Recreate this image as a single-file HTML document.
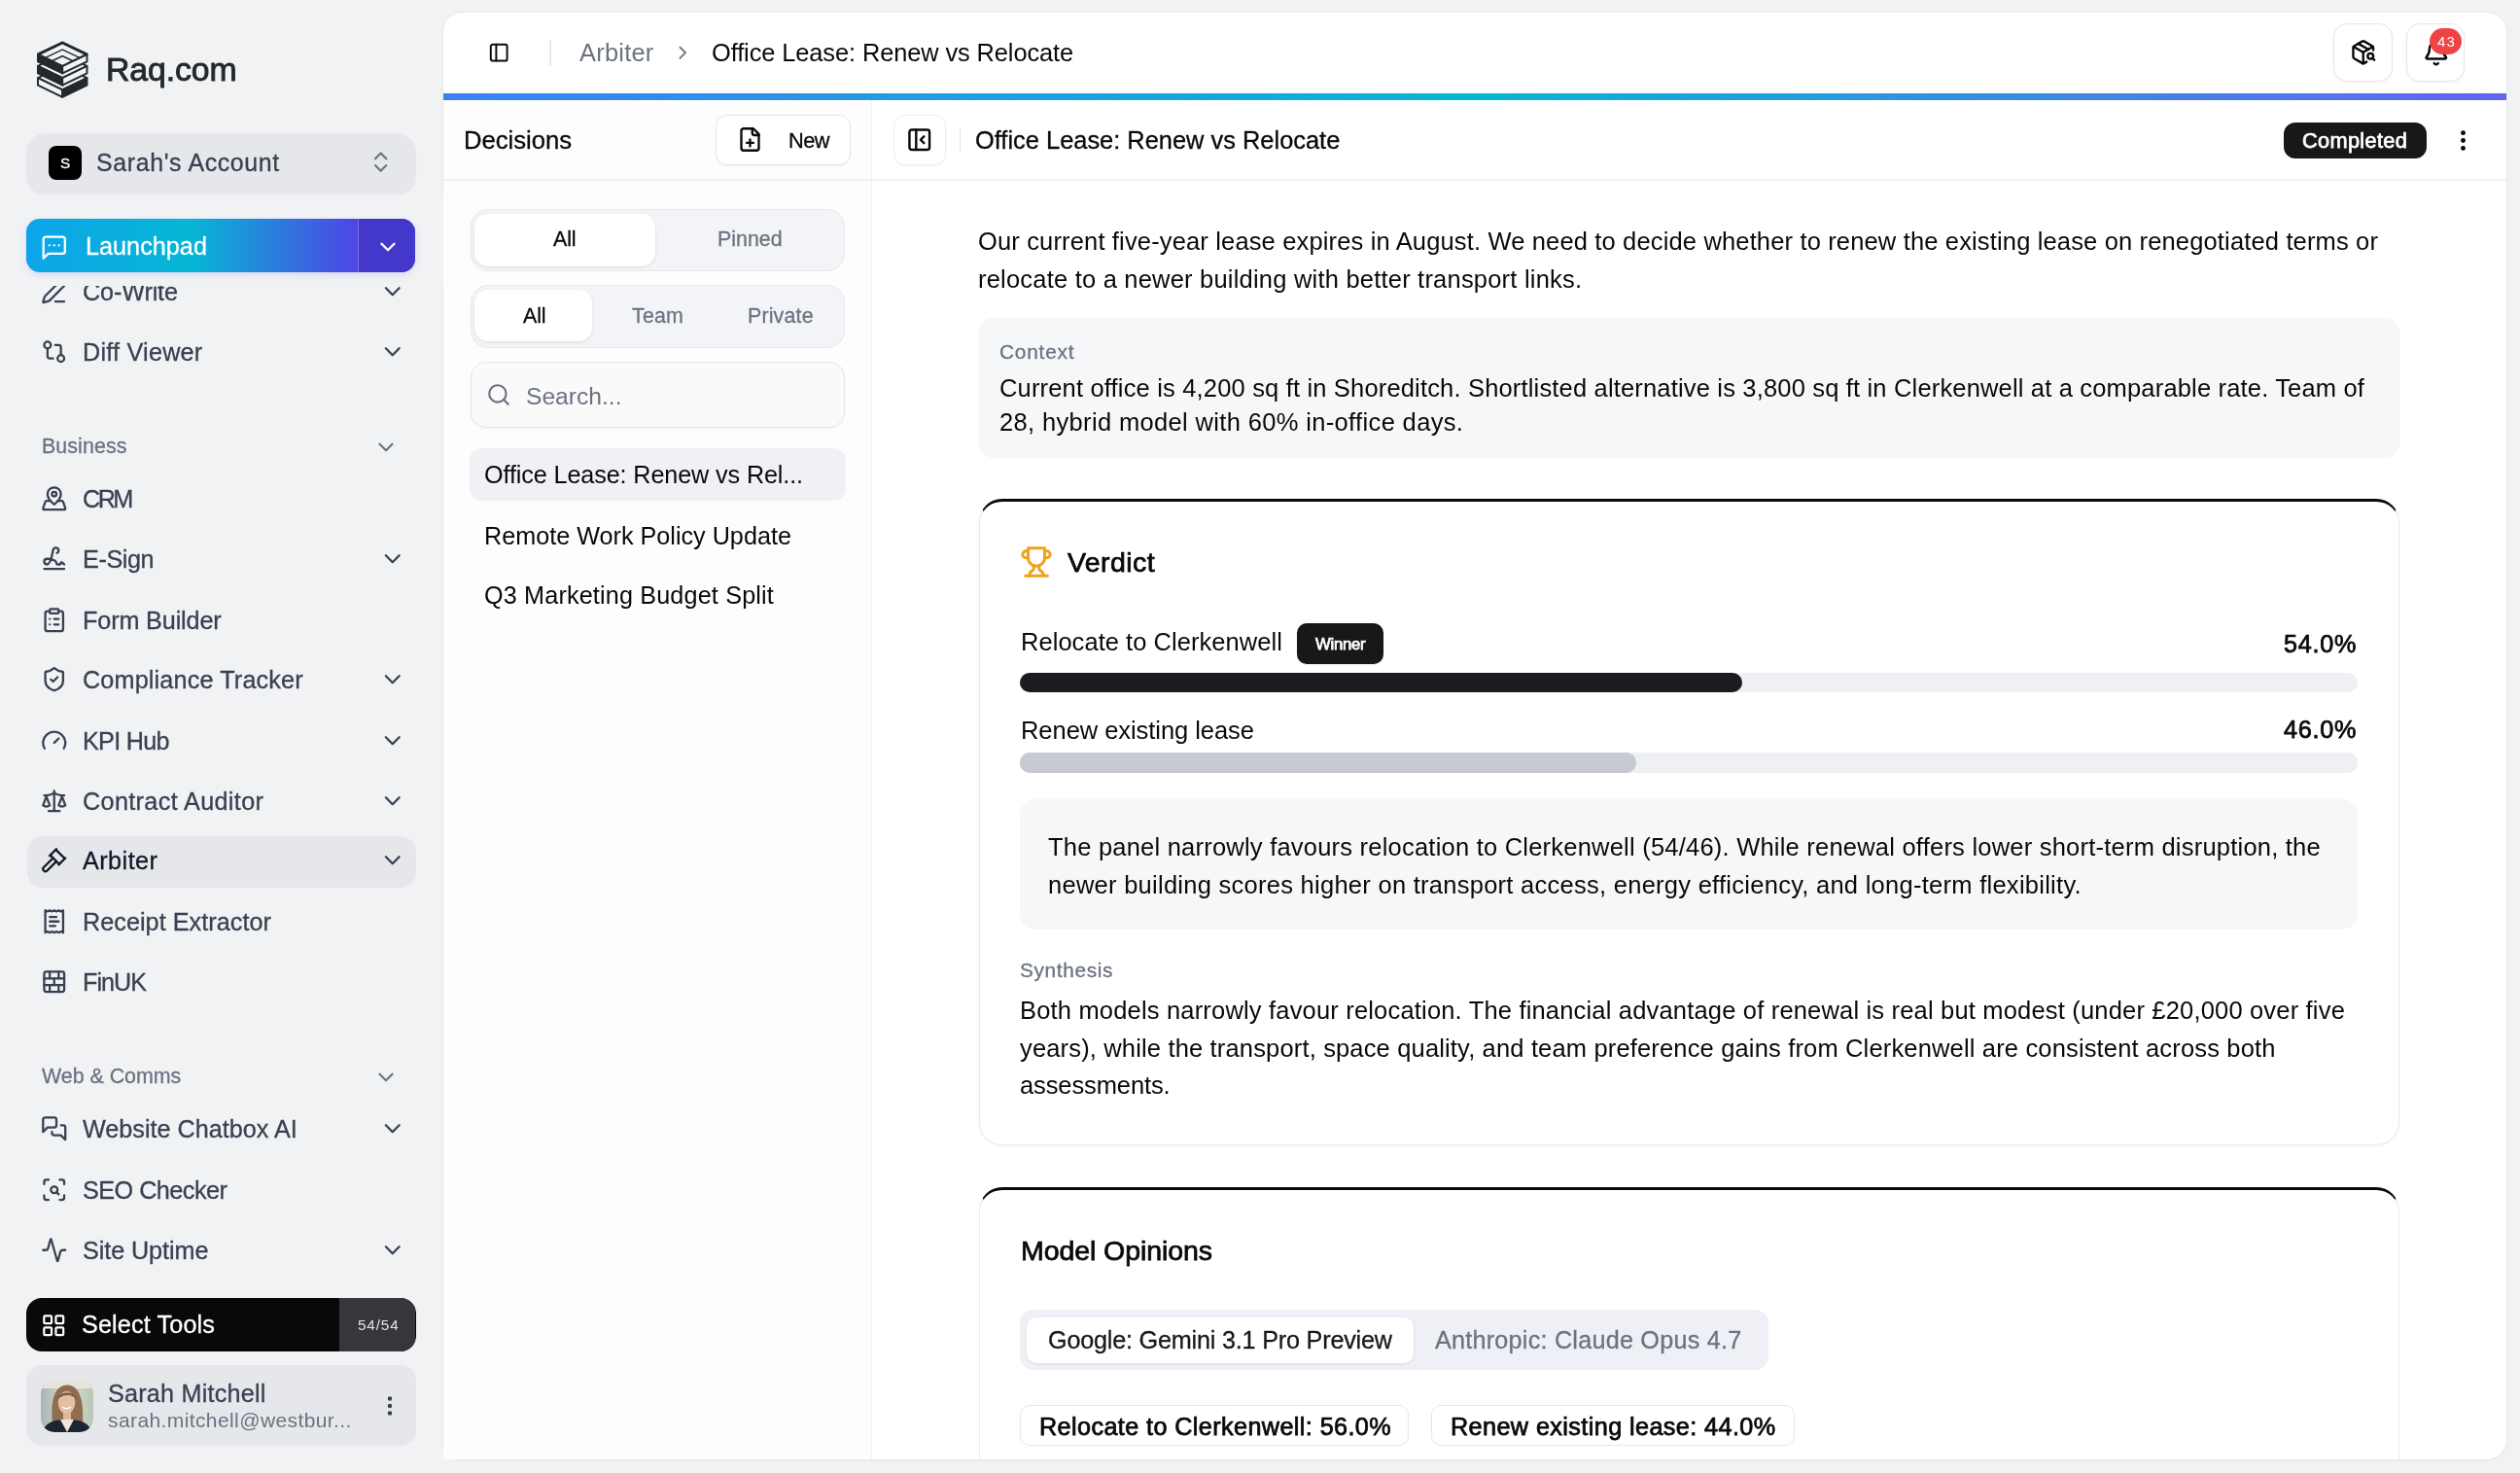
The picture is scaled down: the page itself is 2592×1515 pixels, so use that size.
<!DOCTYPE html>
<html><head><meta charset="utf-8"><title>Arbiter - Office Lease</title>
<style>
html,body{margin:0;padding:0;}
body{width:2592px;height:1515px;position:relative;overflow:hidden;background:#f1f2f4;font-family:"Liberation Sans",sans-serif;}
.a{position:absolute;}
.t{position:absolute;white-space:nowrap;will-change:transform;}
</style></head><body>
<svg class="a" style="left:34px;top:38px;width:60px;height:68px;" viewBox="0 0 1300 1473"><g stroke-width="44" stroke-linejoin="round" transform="translate(650,730) scale(0.96) translate(-650,-730)"><polygon points="655.0,645.0 1225.0,920.0 655.0,1195.0 85.0,920.0" fill="#f1f2f4" stroke="#25292c"/><polygon points="85.0,920.0 655.0,1195.0 655.0,1365.0 85.0,1090.0" fill="#f1f2f4" stroke="#25292c"/><polygon points="655.0,1195.0 1225.0,920.0 1225.0,1090.0 655.0,1365.0" fill="#25292c" stroke="#25292c"/><polygon points="655.0,370.0 1225.0,645.0 655.0,920.0 85.0,645.0" fill="#f1f2f4" stroke="#25292c"/><polygon points="85.0,645.0 655.0,920.0 655.0,1090.0 85.0,815.0" fill="#25292c" stroke="#25292c"/><polygon points="655.0,920.0 1225.0,645.0 1225.0,815.0 655.0,1090.0" fill="#f1f2f4" stroke="#25292c"/><polygon points="655.0,95.0 1225.0,370.0 655.0,645.0 85.0,370.0" fill="#f1f2f4" stroke="#25292c"/><polygon points="85.0,370.0 655.0,645.0 655.0,815.0 85.0,540.0" fill="#25292c" stroke="#25292c"/><polygon points="655.0,645.0 1225.0,370.0 1225.0,540.0 655.0,815.0" fill="#f1f2f4" stroke="#25292c"/><polygon points="655.0,95.0 1225.0,370.0 655.0,645.0 85.0,370.0" fill="#25292c" stroke="none"/><polygon points="655.0,140.1 1178.3,392.5 655.0,645.0 131.7,392.5" fill="#f1f2f4" stroke="none"/><polygon points="655.0,245.2 1069.4,445.1 655.0,645.0 240.6,445.1" fill="#25292c" stroke="none"/><polygon points="655.0,279.8 1033.5,462.4 655.0,645.0 276.5,462.4" fill="#f1f2f4" stroke="none"/><polygon points="655.0,389.8 919.5,517.4 655.0,645.0 390.5,517.4" fill="#25292c" stroke="none"/><polygon points="655.0,429.9 877.9,537.5 655.0,645.0 432.1,537.5" fill="#f1f2f4" stroke="none"/><polygon points="655.0,95.0 1225.0,370.0 655.0,645.0 85.0,370.0" fill="none" stroke="#25292c"/></g></svg>
<div class="t" style="left:108.60px;top:50.19px;font-size:33.80px;line-height:42px;color:#25292c;-webkit-text-stroke:0.75px currentColor;letter-spacing:-0.083px;-webkit-text-stroke:0.9px #25292c;">Raq.com</div>
<div class="a" style="left:27.00px;top:136.70px;width:401.30px;height:63.00px;background:#e5e7eb;border-radius:20px;box-shadow:0 1px 2px rgba(0,0,0,0.04);"></div>
<div class="a" style="left:49.70px;top:150.00px;width:34.50px;height:34.50px;background:#000;border-radius:8px;"></div>
<div class="t" style="left:61.71px;top:157.70px;font-size:15.30px;line-height:19px;color:#fff;-webkit-text-stroke:0.3px currentColor;">S</div>
<div class="t" style="left:99.20px;top:151.67px;font-size:24.90px;line-height:31px;color:#374151;-webkit-text-stroke:0.3px currentColor;letter-spacing:0.653px;">Sarah&#x27;s Account</div>
<svg class="a" style="left:378.35px;top:153.35px;width:27.30px;height:27.30px;" viewBox="0 0 24 24" fill="none" stroke="#6b7280" stroke-width="1.9" stroke-linecap="round" stroke-linejoin="round"><path d="m7 15 5 5 5-5"/><path d="m7 9 5-5 5 5"/></svg>
<div class="t" style="left:84.70px;top:284.27px;font-size:25.20px;line-height:32px;color:#374151;-webkit-text-stroke:0.3px currentColor;letter-spacing:-0.130px;">Co-Write</div>
<svg class="a" style="left:42.45px;top:286.25px;width:27.50px;height:27.50px;" viewBox="0 0 24 24" fill="none" stroke="#374151" stroke-width="2" stroke-linecap="round" stroke-linejoin="round"><path d="M13 21h8"/><path d="M21.174 6.812a1 1 0 0 0-3.986-3.987L3.842 16.174a2 2 0 0 0-.5.83l-1.321 4.352a.5.5 0 0 0 .623.622l4.353-1.32a2 2 0 0 0 .83-.497z"/></svg>
<svg class="a" style="left:389.95px;top:286.15px;width:27.50px;height:27.50px;" viewBox="0 0 24 24" fill="none" stroke="#374151" stroke-width="2" stroke-linecap="round" stroke-linejoin="round"><path d="m6 9 6 6 6-6"/></svg>
<div class="t" style="left:84.70px;top:346.07px;font-size:25.20px;line-height:32px;color:#374151;-webkit-text-stroke:0.3px currentColor;letter-spacing:0.234px;">Diff Viewer</div>
<svg class="a" style="left:42.45px;top:348.05px;width:27.50px;height:27.50px;" viewBox="0 0 24 24" fill="none" stroke="#374151" stroke-width="2" stroke-linecap="round" stroke-linejoin="round"><circle cx="18" cy="18" r="3"/><circle cx="6" cy="6" r="3"/><path d="M13 6h3a2 2 0 0 1 2 2v7"/><path d="M11 18H8a2 2 0 0 1-2-2V9"/></svg>
<svg class="a" style="left:389.95px;top:347.95px;width:27.50px;height:27.50px;" viewBox="0 0 24 24" fill="none" stroke="#374151" stroke-width="2" stroke-linecap="round" stroke-linejoin="round"><path d="m6 9 6 6 6-6"/></svg>
<div class="t" style="left:42.50px;top:445.78px;font-size:21.40px;line-height:27px;color:#6b7280;-webkit-text-stroke:0.3px currentColor;letter-spacing:0.088px;">Business</div>
<svg class="a" style="left:384.00px;top:446.50px;width:26.00px;height:26.00px;" viewBox="0 0 24 24" fill="none" stroke="#6b7280" stroke-width="2" stroke-linecap="round" stroke-linejoin="round"><path d="m6 9 6 6 6-6"/></svg>
<div class="t" style="left:84.70px;top:497.27px;font-size:25.20px;line-height:32px;color:#374151;-webkit-text-stroke:0.3px currentColor;letter-spacing:-2.515px;">CRM</div>
<svg class="a" style="left:42.45px;top:499.25px;width:27.50px;height:27.50px;" viewBox="0 0 24 24" fill="none" stroke="#374151" stroke-width="2" stroke-linecap="round" stroke-linejoin="round"><path d="M18 8c0 3.613-3.869 7.429-5.393 8.795a1 1 0 0 1-1.214 0C9.87 15.429 6 11.613 6 8a6 6 0 0 1 12 0"/><circle cx="12" cy="8" r="2"/><path d="M8.714 14h-3.71a1 1 0 0 0-.948.683l-2.004 6A1 1 0 0 0 3 22h18a1 1 0 0 0 .948-1.316l-2-6a1 1 0 0 0-.949-.684h-3.712"/></svg>
<div class="t" style="left:84.70px;top:559.47px;font-size:25.20px;line-height:32px;color:#374151;-webkit-text-stroke:0.3px currentColor;letter-spacing:-0.400px;">E-Sign</div>
<svg class="a" style="left:42.45px;top:561.45px;width:27.50px;height:27.50px;" viewBox="0 0 24 24" fill="none" stroke="#374151" stroke-width="2" stroke-linecap="round" stroke-linejoin="round"><path d="m21 17-2.156-1.868A.5.5 0 0 0 18 15.5v.5a1 1 0 0 1-1 1h-2a1 1 0 0 1-1-1c0-2.545-3.991-3.97-8.5-4a1 1 0 0 0 0 5c4.153 0 4.745-11.295 5.708-13.5a2.5 2.5 0 1 1 3.31 3.284"/><path d="M3 21h18"/></svg>
<svg class="a" style="left:389.95px;top:561.35px;width:27.50px;height:27.50px;" viewBox="0 0 24 24" fill="none" stroke="#374151" stroke-width="2" stroke-linecap="round" stroke-linejoin="round"><path d="m6 9 6 6 6-6"/></svg>
<div class="t" style="left:84.70px;top:621.97px;font-size:25.20px;line-height:32px;color:#374151;-webkit-text-stroke:0.3px currentColor;letter-spacing:-0.134px;">Form Builder</div>
<svg class="a" style="left:42.45px;top:623.95px;width:27.50px;height:27.50px;" viewBox="0 0 24 24" fill="none" stroke="#374151" stroke-width="2" stroke-linecap="round" stroke-linejoin="round"><rect width="8" height="4" x="8" y="2" rx="1" ry="1"/><path d="M16 4h2a2 2 0 0 1 2 2v14a2 2 0 0 1-2 2H6a2 2 0 0 1-2-2V6a2 2 0 0 1 2-2h2"/><path d="M12 11h4"/><path d="M12 16h4"/><path d="M8 11h.01"/><path d="M8 16h.01"/></svg>
<div class="t" style="left:84.70px;top:682.77px;font-size:25.20px;line-height:32px;color:#374151;-webkit-text-stroke:0.3px currentColor;letter-spacing:0.157px;">Compliance Tracker</div>
<svg class="a" style="left:42.45px;top:684.75px;width:27.50px;height:27.50px;" viewBox="0 0 24 24" fill="none" stroke="#374151" stroke-width="2" stroke-linecap="round" stroke-linejoin="round"><path d="M20 13c0 5-3.5 7.5-7.66 8.95a1 1 0 0 1-.67-.01C7.5 20.5 4 18 4 13V6a1 1 0 0 1 1-1c2 0 4.5-1.2 6.24-2.72a1.17 1.17 0 0 1 1.52 0C14.51 3.81 17 5 19 5a1 1 0 0 1 1 1z"/><path d="m9 12 2 2 4-4"/></svg>
<svg class="a" style="left:389.95px;top:684.65px;width:27.50px;height:27.50px;" viewBox="0 0 24 24" fill="none" stroke="#374151" stroke-width="2" stroke-linecap="round" stroke-linejoin="round"><path d="m6 9 6 6 6-6"/></svg>
<div class="t" style="left:84.70px;top:746.07px;font-size:25.20px;line-height:32px;color:#374151;-webkit-text-stroke:0.3px currentColor;letter-spacing:-0.728px;">KPI Hub</div>
<svg class="a" style="left:42.45px;top:748.05px;width:27.50px;height:27.50px;" viewBox="0 0 24 24" fill="none" stroke="#374151" stroke-width="2" stroke-linecap="round" stroke-linejoin="round"><path d="m12 14 4-4"/><path d="M3.34 19a10 10 0 1 1 17.32 0"/></svg>
<svg class="a" style="left:389.95px;top:747.95px;width:27.50px;height:27.50px;" viewBox="0 0 24 24" fill="none" stroke="#374151" stroke-width="2" stroke-linecap="round" stroke-linejoin="round"><path d="m6 9 6 6 6-6"/></svg>
<div class="t" style="left:84.70px;top:808.27px;font-size:25.20px;line-height:32px;color:#374151;-webkit-text-stroke:0.3px currentColor;letter-spacing:0.354px;">Contract Auditor</div>
<svg class="a" style="left:42.45px;top:810.25px;width:27.50px;height:27.50px;" viewBox="0 0 24 24" fill="none" stroke="#374151" stroke-width="2" stroke-linecap="round" stroke-linejoin="round"><path d="m16 16 3-8 3 8c-.87.65-1.92 1-3 1s-2.13-.35-3-1Z"/><path d="m2 16 3-8 3 8c-.87.65-1.92 1-3 1s-2.13-.35-3-1Z"/><path d="M7 21h10"/><path d="M12 3v18"/><path d="M3 7h2c2 0 5-1 7-2 2 1 5 2 7 2h2"/></svg>
<svg class="a" style="left:389.95px;top:810.15px;width:27.50px;height:27.50px;" viewBox="0 0 24 24" fill="none" stroke="#374151" stroke-width="2" stroke-linecap="round" stroke-linejoin="round"><path d="m6 9 6 6 6-6"/></svg>
<div class="a" style="left:28.00px;top:860.00px;width:399.50px;height:53.30px;background:#e5e7eb;border-radius:16px;"></div>
<div class="t" style="left:84.70px;top:869.47px;font-size:25.20px;line-height:32px;color:#111827;-webkit-text-stroke:0.3px currentColor;letter-spacing:0.464px;">Arbiter</div>
<svg class="a" style="left:42.45px;top:871.45px;width:27.50px;height:27.50px;" viewBox="0 0 24 24" fill="none" stroke="#111827" stroke-width="2" stroke-linecap="round" stroke-linejoin="round"><path d="m14 13-8.381 8.38a1 1 0 0 1-3.001-3l8.384-8.381"/><path d="m16 16 6-6"/><path d="m21.5 10.5-8-8"/><path d="m8 8 6-6"/><path d="m8.5 7.5 8 8"/></svg>
<svg class="a" style="left:389.95px;top:871.35px;width:27.50px;height:27.50px;" viewBox="0 0 24 24" fill="none" stroke="#374151" stroke-width="2" stroke-linecap="round" stroke-linejoin="round"><path d="m6 9 6 6 6-6"/></svg>
<div class="t" style="left:84.70px;top:931.97px;font-size:25.20px;line-height:32px;color:#374151;-webkit-text-stroke:0.3px currentColor;letter-spacing:0.045px;">Receipt Extractor</div>
<svg class="a" style="left:42.45px;top:933.95px;width:27.50px;height:27.50px;" viewBox="0 0 24 24" fill="none" stroke="#374151" stroke-width="2" stroke-linecap="round" stroke-linejoin="round"><path d="M4 2v20l2-1 2 1 2-1 2 1 2-1 2 1 2-1 2 1V2l-2 1-2-1-2 1-2-1-2 1-2-1-2 1Z"/><path d="M14 8H8"/><path d="M16 12H8"/><path d="M13 16H8"/></svg>
<div class="t" style="left:84.70px;top:994.47px;font-size:25.20px;line-height:32px;color:#374151;-webkit-text-stroke:0.3px currentColor;letter-spacing:-0.989px;">FinUK</div>
<svg class="a" style="left:42.45px;top:996.45px;width:27.50px;height:27.50px;" viewBox="0 0 24 24" fill="none" stroke="#374151" stroke-width="2" stroke-linecap="round" stroke-linejoin="round"><rect width="18" height="18" x="3" y="3" rx="2"/><path d="M12 9v6"/><path d="M16 15v6"/><path d="M16 3v6"/><path d="M3 15h18"/><path d="M3 9h18"/><path d="M8 15v6"/><path d="M8 3v6"/></svg>
<div class="t" style="left:42.50px;top:1094.08px;font-size:21.40px;line-height:27px;color:#6b7280;-webkit-text-stroke:0.3px currentColor;letter-spacing:-0.019px;">Web &amp; Comms</div>
<svg class="a" style="left:384.00px;top:1094.50px;width:26.00px;height:26.00px;" viewBox="0 0 24 24" fill="none" stroke="#6b7280" stroke-width="2" stroke-linecap="round" stroke-linejoin="round"><path d="m6 9 6 6 6-6"/></svg>
<div class="t" style="left:84.70px;top:1145.27px;font-size:25.20px;line-height:32px;color:#374151;-webkit-text-stroke:0.3px currentColor;">Website Chatbox AI</div>
<svg class="a" style="left:42.45px;top:1147.25px;width:27.50px;height:27.50px;" viewBox="0 0 24 24" fill="none" stroke="#374151" stroke-width="2" stroke-linecap="round" stroke-linejoin="round"><path d="M14 9a2 2 0 0 1-2 2H6l-4 4V4a2 2 0 0 1 2-2h8a2 2 0 0 1 2 2z"/><path d="M18 9h2a2 2 0 0 1 2 2v11l-4-4h-6a2 2 0 0 1-2-2v-1"/></svg>
<svg class="a" style="left:389.95px;top:1147.15px;width:27.50px;height:27.50px;" viewBox="0 0 24 24" fill="none" stroke="#374151" stroke-width="2" stroke-linecap="round" stroke-linejoin="round"><path d="m6 9 6 6 6-6"/></svg>
<div class="t" style="left:84.70px;top:1208.07px;font-size:25.20px;line-height:32px;color:#374151;-webkit-text-stroke:0.3px currentColor;letter-spacing:-0.510px;">SEO Checker</div>
<svg class="a" style="left:42.45px;top:1210.05px;width:27.50px;height:27.50px;" viewBox="0 0 24 24" fill="none" stroke="#374151" stroke-width="2" stroke-linecap="round" stroke-linejoin="round"><path d="M3 7V5a2 2 0 0 1 2-2h2"/><path d="M17 3h2a2 2 0 0 1 2 2v2"/><path d="M21 17v2a2 2 0 0 1-2 2h-2"/><path d="M7 21H5a2 2 0 0 1-2-2v-2"/><circle cx="12" cy="12" r="3"/><path d="m16 16-1.9-1.9"/></svg>
<div class="t" style="left:84.70px;top:1270.27px;font-size:25.20px;line-height:32px;color:#374151;-webkit-text-stroke:0.3px currentColor;letter-spacing:-0.078px;">Site Uptime</div>
<svg class="a" style="left:42.45px;top:1272.25px;width:27.50px;height:27.50px;" viewBox="0 0 24 24" fill="none" stroke="#374151" stroke-width="2" stroke-linecap="round" stroke-linejoin="round"><path d="M22 12h-2.48a2 2 0 0 0-1.93 1.46l-2.35 8.36a.25.25 0 0 1-.48 0L9.24 2.18a.25.25 0 0 0-.48 0l-2.35 8.36A2 2 0 0 1 4.49 12H2"/></svg>
<svg class="a" style="left:389.95px;top:1272.15px;width:27.50px;height:27.50px;" viewBox="0 0 24 24" fill="none" stroke="#374151" stroke-width="2" stroke-linecap="round" stroke-linejoin="round"><path d="m6 9 6 6 6-6"/></svg>
<div class="a" style="left:0.00px;top:200.00px;width:456.00px;height:94.00px;background:#f1f2f4;z-index:5;"></div>
<div class="a" style="left:27.00px;top:225.30px;width:400.00px;height:54.70px;border-radius:14px;overflow:hidden;background:linear-gradient(90deg,#0ea5e9 0%,#06b6d4 42.5%,#4f46e5 85%,#4f46e5 100%);box-shadow:0 3px 8px -2px rgba(79,70,229,0.22);z-index:6;"><div style="position:absolute;left:340.5px;top:0;width:59.5px;height:100%;background:#4338ca;border-left:1.5px solid rgba(255,255,255,0.28);box-sizing:border-box;"></div></div>
<svg class="a" style="left:40.85px;top:239.55px;width:29.50px;height:29.50px;z-index:7;" viewBox="0 0 24 24" fill="none" stroke="#fff" stroke-width="1.85" stroke-linecap="round" stroke-linejoin="round"><path d="M21 15a2 2 0 0 1-2 2H7l-4 4V5a2 2 0 0 1 2-2h14a2 2 0 0 1 2 2z"/><path d="M8 10h.01"/><path d="M12 10h.01"/><path d="M16 10h.01"/></svg>
<div class="t" style="left:87.50px;top:236.57px;font-size:25.20px;line-height:32px;color:#fff;-webkit-text-stroke:0.3px currentColor;letter-spacing:0.033px;z-index:7;">Launchpad</div>
<svg class="a" style="left:386.00px;top:240.50px;width:26.00px;height:26.00px;z-index:7;" viewBox="0 0 24 24" fill="none" stroke="#fff" stroke-width="2.2" stroke-linecap="round" stroke-linejoin="round"><path d="m6 9 6 6 6-6"/></svg>
<div class="a" style="left:27.00px;top:1335.30px;width:400.50px;height:54.70px;background:#09090b;border-radius:16px;overflow:hidden;"><div style="position:absolute;left:322.2px;top:0;width:78.3px;height:100%;background:#36363b;"></div></div>
<svg class="a" style="left:42.45px;top:1350.45px;width:26.50px;height:26.50px;" viewBox="0 0 24 24" fill="none" stroke="#fff" stroke-width="2" stroke-linecap="round" stroke-linejoin="round"><rect width="7" height="7" x="3" y="3" rx="1"/><rect width="7" height="7" x="14" y="3" rx="1"/><rect width="7" height="7" x="14" y="14" rx="1"/><rect width="7" height="7" x="3" y="14" rx="1"/></svg>
<div class="t" style="left:84.20px;top:1346.07px;font-size:25.20px;line-height:32px;color:#fff;-webkit-text-stroke:0.3px currentColor;letter-spacing:0.141px;">Select Tools</div>
<div class="t" style="left:367.50px;top:1353.20px;font-size:15.30px;line-height:19px;color:#e4e4e7;letter-spacing:0.843px;">54/54</div>
<div class="a" style="left:27.00px;top:1404.20px;width:400.50px;height:83.30px;background:#e5e7eb;border-radius:16px;"></div>
<svg class="a" style="left:42px;top:1418.7px;width:54px;height:54px;border-radius:14px;" viewBox="0 0 54 54">
<defs><clipPath id="av"><rect width="54" height="54" rx="14"/></clipPath>
<linearGradient id="bgv" x1="0" y1="0" x2="1" y2="0"><stop offset="0" stop-color="#a9b4b2"/><stop offset="0.5" stop-color="#d8dcd6"/><stop offset="1" stop-color="#b9c7b4"/></linearGradient></defs>
<g clip-path="url(#av)">
<rect width="54" height="54" fill="url(#bgv)"/>
<rect x="0" y="0" width="54" height="9" fill="#e6e4dc"/>
<path d="M12 46 C10 26 12 6 27 5.5 C42 6 44 26 43 46 Z" fill="#8f6d4d"/>
<ellipse cx="26.5" cy="23.5" rx="8.8" ry="11.5" fill="#e6bea2"/><path d="M22 28 Q26.5 31.5 31 28" stroke="#fff" stroke-width="1.3" fill="none"/>
<path d="M17 21 C17 11 37 11 37 21 C34 15 22 14 17 21Z" fill="#7a5a3e"/>
<rect x="23" y="34" width="8" height="8" fill="#e0b79a"/>
<path d="M2 54 C4 45 11 41 27 41 C43 41 50 45 52 54 Z" fill="#1d2433"/>
<path d="M20 41 L27 54 L34 41 Z" fill="#efe6da"/>
</g></svg>
<div class="t" style="left:111.30px;top:1417.27px;font-size:25.20px;line-height:32px;color:#374151;-webkit-text-stroke:0.3px currentColor;letter-spacing:0.212px;">Sarah Mitchell</div>
<div class="t" style="left:111.30px;top:1448.42px;font-size:21.00px;line-height:26px;color:#6b7280;letter-spacing:0.401px;">sarah.mitchell@westbur...</div>
<svg class="a" style="left:387.80px;top:1433.30px;width:26.00px;height:26.00px;" viewBox="0 0 24 24" fill="#374151" stroke="#374151" stroke-width="2.2" stroke-linecap="round" stroke-linejoin="round"><circle cx="12" cy="12" r="1"/><circle cx="12" cy="5" r="1"/><circle cx="12" cy="19" r="1"/></svg>
<div class="a" style="left:456.00px;top:13.00px;width:2122.30px;height:1488.20px;background:#fff;border-radius:20px;box-shadow:0 0 0 1px rgba(0,0,0,0.03), 0 1px 3px rgba(0,0,0,0.04);overflow:hidden;"></div>
<svg class="a" style="left:502.40px;top:43.40px;width:22.40px;height:22.40px;" viewBox="0 0 24 24" fill="none" stroke="#09090b" stroke-width="2.1" stroke-linecap="round" stroke-linejoin="round"><rect width="18" height="18" x="3" y="3" rx="2"/><path d="M9 3v18"/></svg>
<div class="a" style="left:565.20px;top:40.70px;width:1.60px;height:26.30px;background:#e5e7eb;"></div>
<div class="t" style="left:595.70px;top:38.10px;font-size:25.40px;line-height:32px;color:#6b7280;letter-spacing:0.249px;">Arbiter</div>
<svg class="a" style="left:690.80px;top:43.30px;width:22.40px;height:22.40px;" viewBox="0 0 24 24" fill="none" stroke="#6b7280" stroke-width="2" stroke-linecap="round" stroke-linejoin="round"><path d="m9 18 6-6-6-6"/></svg>
<div class="t" style="left:731.90px;top:38.10px;font-size:25.40px;line-height:32px;color:#09090b;letter-spacing:-0.094px;">Office Lease: Renew vs Relocate</div>
<div class="a" style="left:2399.50px;top:24.30px;width:61.00px;height:60.00px;background:#fff;border:1.6px solid #e4e6ec;border-radius:14px;box-sizing:border-box;box-shadow:0 1px 2px rgba(0,0,0,0.05);"></div>
<svg class="a" style="left:2417.05px;top:40.45px;width:27.50px;height:27.50px;" viewBox="0 0 24 24" fill="none" stroke="#09090b" stroke-width="2.1" stroke-linecap="round" stroke-linejoin="round"><path d="M21 10V8a2 2 0 0 0-1-1.73l-7-4a2 2 0 0 0-2 0l-7 4A2 2 0 0 0 3 8v8a2 2 0 0 0 1 1.73l7 4a2 2 0 0 0 2 0l2-1.14"/><path d="m7.5 4.27 9 5.15"/><polyline points="3.29 7 12 12 20.71 7"/><line x1="12" x2="12" y1="22" y2="12"/><circle cx="18.5" cy="15.5" r="2.5"/><path d="M20.27 17.27 22 19"/></svg>
<div class="a" style="left:2475.40px;top:24.30px;width:60.00px;height:60.00px;background:#fff;border:1.6px solid #e4e6ec;border-radius:14px;box-sizing:border-box;box-shadow:0 1px 2px rgba(0,0,0,0.05);"></div>
<svg class="a" style="left:2491.55px;top:40.75px;width:27.50px;height:27.50px;" viewBox="0 0 24 24" fill="none" stroke="#09090b" stroke-width="2.1" stroke-linecap="round" stroke-linejoin="round"><path d="M10.268 21a2 2 0 0 0 3.464 0"/><path d="M3.262 15.326A1 1 0 0 0 4 17h16a1 1 0 0 0 .74-1.673C19.41 13.956 18 12.499 18 8A6 6 0 0 0 6 8c0 4.499-1.411 5.956-2.738 7.326"/></svg>
<div class="a" style="left:2499.20px;top:28.50px;width:32.70px;height:27.00px;background:#ef4444;border-radius:14px;"></div>
<div class="t" style="left:2506.60px;top:33.10px;font-size:15.00px;line-height:19px;color:#fff;letter-spacing:1.150px;">43</div>
<div class="a" style="left:456.00px;top:96.00px;width:2122.30px;height:7.20px;background:linear-gradient(90deg,#3b82f6,#06b6d4 50%,#6366f1);"></div>
<div class="a" style="left:456.00px;top:103.20px;width:441.20px;height:1398.00px;background:#fdfdfd;border-right:1.8px solid #f0f0f1;box-sizing:border-box;"></div>
<div class="a" style="left:456.00px;top:184.00px;width:440.40px;height:1.60px;background:#eef0f3;"></div>
<div class="t" style="left:476.80px;top:128.09px;font-size:25.70px;line-height:32px;color:#09090b;-webkit-text-stroke:0.3px currentColor;letter-spacing:-0.026px;">Decisions</div>
<div class="a" style="left:735.70px;top:117.70px;width:139.30px;height:52.00px;background:#fff;border:1.6px solid #e5e7eb;border-radius:12px;box-sizing:border-box;box-shadow:0 1px 2px rgba(0,0,0,0.05);"></div>
<svg class="a" style="left:757.80px;top:130.40px;width:27.00px;height:27.00px;" viewBox="0 0 24 24" fill="none" stroke="#09090b" stroke-width="2.1" stroke-linecap="round" stroke-linejoin="round"><path d="M15 2H6a2 2 0 0 0-2 2v16a2 2 0 0 0 2 2h12a2 2 0 0 0 2-2V7Z"/><path d="M14 2v4a2 2 0 0 0 2 2h4"/><path d="M9 15h6"/><path d="M12 18v-6"/></svg>
<div class="t" style="left:810.50px;top:130.95px;font-size:21.80px;line-height:27px;color:#09090b;-webkit-text-stroke:0.3px currentColor;letter-spacing:-0.505px;">New</div>
<div class="a" style="left:483.80px;top:215.00px;width:385.60px;height:63.90px;background:#f3f4f7;border:1.6px solid #e6e8ec;border-radius:18px;box-sizing:border-box;"></div>
<div class="a" style="left:488.20px;top:219.50px;width:185.50px;height:54.00px;background:#fff;border-radius:14px;box-shadow:0 1px 3px rgba(0,0,0,0.10);"></div>
<div class="t" style="left:569.25px;top:232.78px;font-size:21.40px;line-height:27px;color:#09090b;-webkit-text-stroke:0.3px currentColor;letter-spacing:-0.127px;">All</div>
<div class="t" style="left:737.65px;top:232.78px;font-size:21.40px;line-height:27px;color:#6b7280;-webkit-text-stroke:0.3px currentColor;">Pinned</div>
<div class="a" style="left:483.80px;top:293.00px;width:385.60px;height:64.50px;background:#f3f4f7;border:1.6px solid #e6e8ec;border-radius:18px;box-sizing:border-box;"></div>
<div class="a" style="left:488.20px;top:297.60px;width:120.90px;height:53.70px;background:#fff;border-radius:14px;box-shadow:0 1px 3px rgba(0,0,0,0.10);"></div>
<div class="t" style="left:537.50px;top:312.18px;font-size:21.40px;line-height:27px;color:#09090b;-webkit-text-stroke:0.3px currentColor;letter-spacing:-0.077px;">All</div>
<div class="t" style="left:649.75px;top:312.18px;font-size:21.40px;line-height:27px;color:#6b7280;-webkit-text-stroke:0.3px currentColor;letter-spacing:0.192px;">Team</div>
<div class="t" style="left:769.35px;top:312.18px;font-size:21.40px;line-height:27px;color:#6b7280;-webkit-text-stroke:0.3px currentColor;letter-spacing:0.158px;">Private</div>
<div class="a" style="left:483.70px;top:372.40px;width:385.50px;height:67.40px;background:#fafafb;border:1.6px solid #e5e7eb;border-radius:16px;box-sizing:border-box;box-shadow:0 1px 2px rgba(0,0,0,0.05);"></div>
<svg class="a" style="left:499.80px;top:392.50px;width:26.00px;height:26.00px;" viewBox="0 0 24 24" fill="none" stroke="#6b7280" stroke-width="2" stroke-linecap="round" stroke-linejoin="round"><circle cx="11" cy="11" r="8"/><path d="m21 21-4.3-4.3"/></svg>
<div class="t" style="left:540.70px;top:391.94px;font-size:24.70px;line-height:31px;color:#6b7280;letter-spacing:-0.037px;">Search...</div>
<div class="a" style="left:482.90px;top:460.70px;width:386.80px;height:54.80px;background:#f0f1f5;border-radius:12px;"></div>
<div class="t" style="left:498.10px;top:472.17px;font-size:25.20px;line-height:32px;color:#09090b;letter-spacing:-0.115px;">Office Lease: Renew vs Rel...</div>
<div class="t" style="left:498.10px;top:535.27px;font-size:25.20px;line-height:32px;color:#09090b;">Remote Work Policy Update</div>
<div class="t" style="left:498.10px;top:596.07px;font-size:25.20px;line-height:32px;color:#09090b;letter-spacing:0.158px;">Q3 Marketing Budget Split</div>
<div class="a" style="left:918.70px;top:117.70px;width:54.00px;height:52.00px;background:#fff;border:1.6px solid #eceef2;border-radius:12px;box-sizing:border-box;box-shadow:0 1px 2px rgba(0,0,0,0.05);"></div>
<svg class="a" style="left:931.55px;top:130.45px;width:27.50px;height:27.50px;" viewBox="0 0 24 24" fill="none" stroke="#09090b" stroke-width="2.1" stroke-linecap="round" stroke-linejoin="round"><rect width="18" height="18" x="3" y="3" rx="2"/><path d="M9 3v18"/><path d="m16 15-3-3 3-3"/></svg>
<div class="a" style="left:986.60px;top:130.60px;width:1.60px;height:26.20px;background:#e5e7eb;"></div>
<div class="t" style="left:1002.80px;top:128.00px;font-size:25.40px;line-height:32px;color:#09090b;-webkit-text-stroke:0.3px currentColor;letter-spacing:0.012px;">Office Lease: Renew vs Relocate</div>
<div class="a" style="left:2349.00px;top:126.00px;width:146.60px;height:37.00px;background:#18181b;border-radius:12px;"></div>
<div class="t" style="left:2368.10px;top:130.98px;font-size:21.70px;line-height:27px;color:#fff;-webkit-text-stroke:0.75px currentColor;letter-spacing:0.373px;">Completed</div>
<svg class="a" style="left:2520.10px;top:131.00px;width:27.00px;height:27.00px;" viewBox="0 0 24 24" fill="#09090b" stroke="#09090b" stroke-width="2.4" stroke-linecap="round" stroke-linejoin="round"><circle cx="12" cy="12" r="1"/><circle cx="12" cy="5" r="1"/><circle cx="12" cy="19" r="1"/></svg>
<div class="a" style="left:896.40px;top:184.00px;width:1682.00px;height:1.60px;background:#f1f2f4;"></div>
<div class="t" style="left:1006.00px;top:232.26px;font-size:25.50px;line-height:32px;color:#09090b;letter-spacing:0.151px;">Our current five-year lease expires in August. We need to decide whether to renew the existing lease on renegotiated terms or</div>
<div class="t" style="left:1006.00px;top:271.06px;font-size:25.50px;line-height:32px;color:#09090b;letter-spacing:0.206px;">relocate to a newer building with better transport links.</div>
<div class="a" style="left:1006.30px;top:326.80px;width:1462.50px;height:144.00px;background:#f6f7f9;border-radius:16px;"></div>
<div class="t" style="left:1027.70px;top:348.99px;font-size:20.80px;line-height:26px;color:#6b7280;-webkit-text-stroke:0.3px currentColor;letter-spacing:0.807px;">Context</div>
<div class="t" style="left:1027.70px;top:382.86px;font-size:25.50px;line-height:32px;color:#09090b;letter-spacing:0.169px;">Current office is 4,200 sq ft in Shoreditch. Shortlisted alternative is 3,800 sq ft in Clerkenwell at a comparable rate. Team of</div>
<div class="t" style="left:1027.70px;top:418.36px;font-size:25.50px;line-height:32px;color:#09090b;letter-spacing:0.348px;">28, hybrid model with 60% in-office days.</div>
<div class="a" style="left:1007.30px;top:512.60px;width:1460.50px;height:665.40px;background:#fff;border:1.6px solid #e9ebee;border-top:3.3px solid #09090b;border-radius:24px;box-sizing:border-box;box-shadow:0 1px 3px rgba(0,0,0,0.05);"></div>
<svg class="a" style="left:1049.00px;top:561.00px;width:34.00px;height:34.00px;" viewBox="0 0 24 24" fill="none" stroke="#f0a21b" stroke-width="2.1" stroke-linecap="round" stroke-linejoin="round"><path d="M6 9H4.5a2.5 2.5 0 0 1 0-5H6"/><path d="M18 9h1.5a2.5 2.5 0 0 0 0-5H18"/><path d="M4 22h16"/><path d="M10 14.66V17c0 .55-.47.98-.97 1.21C7.85 18.75 7 20.24 7 22"/><path d="M14 14.66V17c0 .55.47.98.97 1.21C16.15 18.75 17 20.24 17 22"/><path d="M18 2H6v7a6 6 0 0 0 12 0V2Z"/></svg>
<div class="t" style="left:1098.40px;top:560.02px;font-size:28.50px;line-height:36px;color:#09090b;-webkit-text-stroke:0.75px currentColor;letter-spacing:0.405px;">Verdict</div>
<div class="t" style="left:1050.00px;top:643.66px;font-size:25.50px;line-height:32px;color:#09090b;letter-spacing:0.042px;">Relocate to Clerkenwell</div>
<div class="a" style="left:1334.20px;top:641.00px;width:88.40px;height:42.30px;background:#18181b;border-radius:10px;box-shadow:0 1px 2px rgba(0,0,0,0.1);"></div>
<div class="t" style="left:1352.65px;top:652.21px;font-size:16.70px;line-height:21px;color:#fff;-webkit-text-stroke:0.75px currentColor;letter-spacing:-0.248px;">Winner</div>
<div class="t" style="left:2349.40px;top:646.27px;font-size:25.20px;line-height:32px;color:#09090b;-webkit-text-stroke:0.75px currentColor;letter-spacing:0.739px;">54.0%</div>
<div class="a" style="left:1049.00px;top:691.60px;width:1375.80px;height:20.50px;background:#eff0f4;border-radius:10px;"></div>
<div class="a" style="left:1049.00px;top:691.60px;width:743.00px;height:20.50px;background:#1b1c20;border-radius:10px;"></div>
<div class="t" style="left:1050.00px;top:734.66px;font-size:25.50px;line-height:32px;color:#09090b;letter-spacing:-0.051px;">Renew existing lease</div>
<div class="t" style="left:2349.40px;top:734.27px;font-size:25.20px;line-height:32px;color:#09090b;-webkit-text-stroke:0.75px currentColor;letter-spacing:0.739px;">46.0%</div>
<div class="a" style="left:1049.00px;top:774.20px;width:1375.80px;height:20.40px;background:#eff0f4;border-radius:10px;"></div>
<div class="a" style="left:1049.00px;top:774.20px;width:633.80px;height:20.40px;background:#c6cad3;border-radius:10px;"></div>
<div class="a" style="left:1048.90px;top:822.30px;width:1376.20px;height:133.30px;background:#f6f7f9;border-radius:16px;"></div>
<div class="t" style="left:1077.90px;top:854.76px;font-size:25.50px;line-height:32px;color:#09090b;letter-spacing:0.220px;">The panel narrowly favours relocation to Clerkenwell (54/46). While renewal offers lower short-term disruption, the</div>
<div class="t" style="left:1077.90px;top:893.86px;font-size:25.50px;line-height:32px;color:#09090b;letter-spacing:0.267px;">newer building scores higher on transport access, energy efficiency, and long-term flexibility.</div>
<div class="t" style="left:1049.00px;top:985.39px;font-size:20.80px;line-height:26px;color:#6b7280;-webkit-text-stroke:0.3px currentColor;letter-spacing:0.666px;">Synthesis</div>
<div class="t" style="left:1049.00px;top:1022.86px;font-size:25.50px;line-height:32px;color:#09090b;letter-spacing:0.179px;">Both models narrowly favour relocation. The financial advantage of renewal is real but modest (under £20,000 over five</div>
<div class="t" style="left:1049.00px;top:1061.66px;font-size:25.50px;line-height:32px;color:#09090b;letter-spacing:0.158px;">years), while the transport, space quality, and team preference gains from Clerkenwell are consistent across both</div>
<div class="t" style="left:1049.00px;top:1099.66px;font-size:25.50px;line-height:32px;color:#09090b;letter-spacing:-0.112px;">assessments.</div>
<div class="a" style="left:456px;top:13px;width:2122.3px;height:1488.2px;border-radius:20px;overflow:hidden;pointer-events:none;">
<div class="a" style="left:551.30px;top:1207.50px;width:1460.50px;height:600.00px;background:#fff;border:1.6px solid #e9ebee;border-top:3.3px solid #09090b;border-radius:24px;box-sizing:border-box;"></div>
</div>
<div class="t" style="left:1050.00px;top:1268.12px;font-size:28.50px;line-height:36px;color:#09090b;-webkit-text-stroke:0.75px currentColor;letter-spacing:-0.083px;">Model Opinions</div>
<div class="a" style="left:1048.90px;top:1347.10px;width:769.70px;height:62.20px;background:#eff0f5;border-radius:14px;"></div>
<div class="a" style="left:1056.00px;top:1355.00px;width:397.60px;height:47.10px;background:#fff;border-radius:10px;box-shadow:0 1px 3px rgba(0,0,0,0.10);"></div>
<div class="t" style="left:1077.90px;top:1361.67px;font-size:25.20px;line-height:32px;color:#18181b;-webkit-text-stroke:0.3px currentColor;letter-spacing:-0.199px;">Google: Gemini 3.1 Pro Preview</div>
<div class="t" style="left:1475.70px;top:1361.67px;font-size:25.20px;line-height:32px;color:#6b7280;-webkit-text-stroke:0.3px currentColor;letter-spacing:0.229px;">Anthropic: Claude Opus 4.7</div>
<div class="a" style="left:1049.30px;top:1445.00px;width:400.00px;height:42.10px;background:#fff;border:1.6px solid #e5e7eb;border-radius:10px;box-sizing:border-box;"></div>
<div class="t" style="left:1068.60px;top:1450.97px;font-size:25.20px;line-height:32px;color:#09090b;-webkit-text-stroke:0.75px currentColor;letter-spacing:0.402px;">Relocate to Clerkenwell: 56.0%</div>
<div class="a" style="left:1472.10px;top:1445.00px;width:373.60px;height:42.10px;background:#fff;border:1.6px solid #e5e7eb;border-radius:10px;box-sizing:border-box;"></div>
<div class="t" style="left:1491.80px;top:1450.97px;font-size:25.20px;line-height:32px;color:#09090b;-webkit-text-stroke:0.75px currentColor;letter-spacing:0.413px;">Renew existing lease: 44.0%</div>
</body></html>
